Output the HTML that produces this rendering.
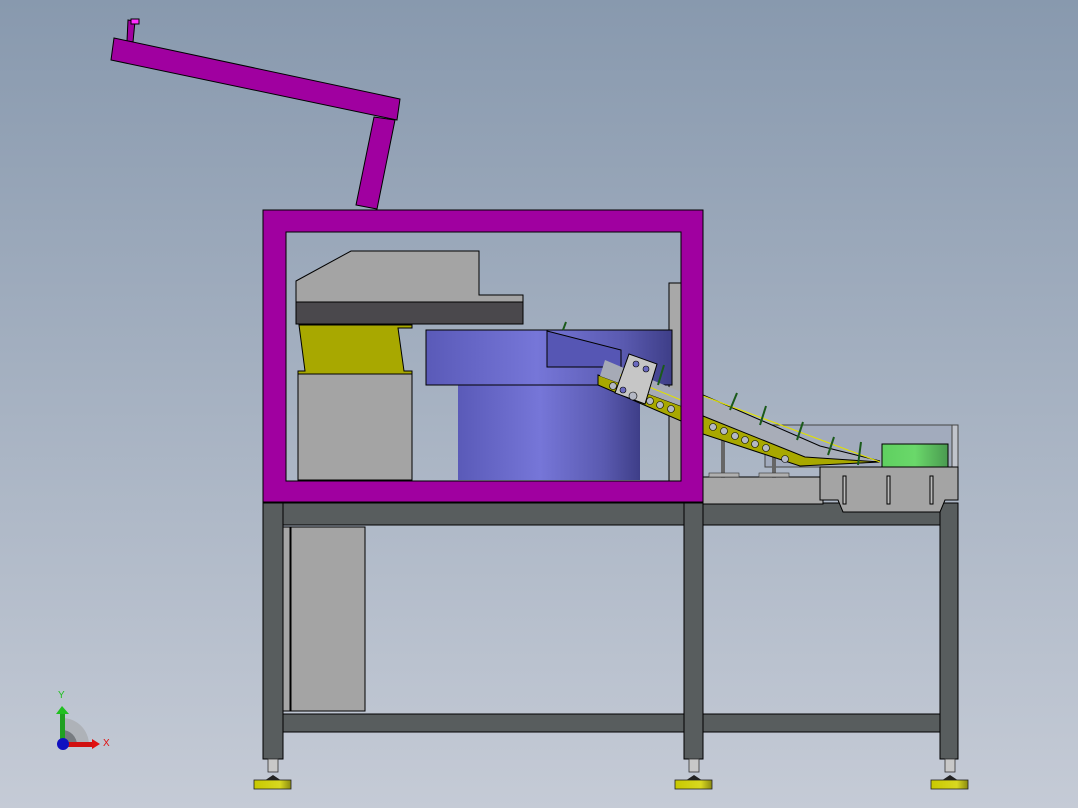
<!DOCTYPE html>
<html><head><meta charset="utf-8"><style>
html,body{margin:0;padding:0;width:1078px;height:808px;overflow:hidden}
svg{display:block}
</style></head><body>
<svg width="1078" height="808" viewBox="0 0 1078 808" xmlns="http://www.w3.org/2000/svg">
<defs>
<linearGradient id="bg" x1="0" y1="0" x2="0" y2="1"><stop offset="0" stop-color="#8899ae"/><stop offset="1" stop-color="#c5cbd6"/></linearGradient>
<linearGradient id="blue" x1="0" y1="0" x2="1" y2="0"><stop offset="0" stop-color="#5a5ab8"/><stop offset="0.45" stop-color="#7676d8"/><stop offset="0.8" stop-color="#5a5ab0"/><stop offset="1" stop-color="#3e3e88"/></linearGradient>
<linearGradient id="green" x1="0" y1="0" x2="1" y2="0"><stop offset="0" stop-color="#5fd060"/><stop offset="0.5" stop-color="#6ad86a"/><stop offset="1" stop-color="#4a9a50"/></linearGradient>
<linearGradient id="ylw" x1="0" y1="0" x2="1" y2="0"><stop offset="0" stop-color="#c8c800"/><stop offset="0.7" stop-color="#d8d820"/><stop offset="1" stop-color="#8a8a10"/></linearGradient>
</defs>
<rect width="1078" height="808" fill="url(#bg)"/>

<g fill="#a000a0" stroke="#000" stroke-width="1">
<polygon points="128,20 135,21 133,42 127,41"/>
<polygon points="114,38 400,99 397,120 111,60"/>
<polygon points="374,117 395,120 377,209 356,205"/>
</g>
<rect x="131" y="19" width="8" height="5" fill="#ff30ff" stroke="#000" stroke-width="1"/>

<g stroke="#000" stroke-width="1">
<rect x="263" y="503" width="695" height="22" fill="#585d5e"/>
<rect x="283" y="714" width="657" height="18" fill="#585d5e"/>
<rect x="263" y="503" width="20" height="256" fill="#585d5e"/>
<rect x="684" y="503" width="19" height="256" fill="#585d5e"/>
<rect x="940" y="503" width="18" height="256" fill="#585d5e"/>
<rect x="283" y="527" width="7" height="184" fill="#a6a6a6"/>
<rect x="291" y="527" width="74" height="184" fill="#a4a4a4"/>
</g>
<g id="foot">
<rect x="268" y="759" width="10" height="13" fill="#c8c8c8" stroke="#333" stroke-width="0.8"/>
<polygon points="264,781 273,775 282,781" fill="#222"/>
<rect x="254" y="780" width="37" height="9" fill="url(#ylw)" stroke="#222" stroke-width="0.8"/>
</g>
<use href="#foot" x="421"/>
<use href="#foot" x="677"/>

<rect x="703" y="477" width="120" height="27" fill="#a8a8a8" stroke="#000" stroke-width="1"/>
<rect x="765" y="425" width="193" height="42" fill="#a2abbd" stroke="#444" stroke-width="1"/>
<rect x="952" y="425" width="6" height="42" fill="#c0c4cc" stroke="#444" stroke-width="1"/>
<rect x="882" y="444" width="66" height="23" fill="url(#green)" stroke="#000" stroke-width="1"/>
<polygon points="820,467 958,467 958,500 945,500 940,512 843,512 838,500 820,500" fill="#a4a4a4" stroke="#000" stroke-width="1"/>
<g stroke="#000" stroke-width="1" fill="#bbb"><rect x="843" y="476" width="3" height="28"/><rect x="887" y="476" width="3" height="28"/><rect x="930" y="476" width="3" height="28"/></g>
<rect x="721" y="423" width="4" height="55" fill="#666"/>
<rect x="772" y="440" width="4" height="38" fill="#666"/>
<rect x="709" y="473" width="30" height="4" fill="#b0b0b0" stroke="#333" stroke-width="0.6"/>
<rect x="759" y="473" width="30" height="4" fill="#b0b0b0" stroke="#333" stroke-width="0.6"/>
<polygon points="703,395 820,446 880,461 860,463 800,463 703,416" fill="#a8adb8" stroke="#000" stroke-width="1"/>
<polygon points="703,416 805,457 880,462 800,466 703,434" fill="#a8a800" stroke="#000" stroke-width="1"/>
<line x1="703" y1="396" x2="880" y2="462" stroke="#e0e000" stroke-width="1.2"/>
<g fill="#b4b8c4" stroke="#000" stroke-width="0.6">
<circle cx="713" cy="427" r="3.5"/><circle cx="724" cy="431" r="3.5"/><circle cx="735" cy="436" r="3.5"/><circle cx="745" cy="440" r="3.5"/><circle cx="755" cy="444" r="3.5"/><circle cx="766" cy="448" r="3.5"/><circle cx="785" cy="459" r="3.5"/>
</g>
<g stroke="#1a5a1a" stroke-width="2">
<line x1="730" y1="410" x2="737" y2="393"/><line x1="760" y1="425" x2="766" y2="406"/><line x1="797" y1="440" x2="803" y2="422"/><line x1="828" y1="455" x2="834" y2="437"/><line x1="858" y1="465" x2="861" y2="442"/>
</g>

<rect x="669" y="283" width="12" height="198" fill="#a8a8a8" stroke="#000" stroke-width="1"/>
<rect x="458" y="385" width="182" height="95" fill="url(#blue)"/>
<rect x="426" y="330" width="246" height="55" fill="url(#blue)" stroke="#000" stroke-width="1"/>
<polygon points="547,331 621,350 621,367 547,367" fill="#5656b4" stroke="#000" stroke-width="1"/>
<polygon points="598,375 681,406 681,421 598,385" fill="#a8a800" stroke="#000" stroke-width="1"/>
<polygon points="605,360 645,377 681,392 681,406 600,376" fill="#a6aab6"/>
<line x1="620" y1="375" x2="681" y2="400" stroke="#e0e000" stroke-width="1"/>
<g fill="#b4b8c4" stroke="#000" stroke-width="0.6">
<circle cx="613" cy="386" r="3.5"/><circle cx="650" cy="401" r="3.5"/><circle cx="660" cy="405" r="3.5"/><circle cx="671" cy="409" r="3.5"/>
</g>
<polygon points="629,354 657,364 645,404 615,393" fill="#c6c6c6" stroke="#000" stroke-width="1"/>
<circle cx="636" cy="364" r="3" fill="#6a6ac0" stroke="#000" stroke-width="0.6"/>
<circle cx="646" cy="369" r="3" fill="#6a6ac0" stroke="#000" stroke-width="0.6"/>
<circle cx="623" cy="390" r="3" fill="#6a6ac0" stroke="#000" stroke-width="0.6"/>
<circle cx="633" cy="396" r="4" fill="#b4b8c4" stroke="#000" stroke-width="0.6"/>
<g stroke="#1a5a1a" stroke-width="2"><line x1="563" y1="330" x2="566" y2="322"/><line x1="658" y1="385" x2="664" y2="365"/></g>

<polygon points="296,281 351,251 479,251 479,295 523,295 523,302 296,302" fill="#a4a4a4" stroke="#000" stroke-width="1"/>
<rect x="296" y="302" width="227" height="22" fill="#4a484c" stroke="#000" stroke-width="1"/>
<polygon points="299,325 412,325 412,328 398,328 404,371 412,371 412,374 298,374 298,371 305,371" fill="#a8a800" stroke="#000" stroke-width="1"/>
<rect x="298" y="374" width="114" height="106" fill="#a4a4a4" stroke="#000" stroke-width="1"/>

<path d="M263,210 H703 V502 H263 Z M286,232 V481 H681 V232 Z" fill="#a000a0" fill-rule="evenodd" stroke="#000" stroke-width="1"/>

<path d="M62,745 L62,718 A27,27 0 0 1 89,745 Z" fill="#aeb2b8"/>
<path d="M62,745 L62,730 A15,15 0 0 1 77,745 Z" fill="#777b80"/>
<rect x="60" y="712" width="5" height="33" fill="#20a020"/>
<polygon points="56,714 62,706 69,714" fill="#20c020"/>
<rect x="62" y="742" width="30" height="5" fill="#d01010"/>
<polygon points="92,739 100,744 92,749" fill="#e01010"/>
<circle cx="63" cy="744" r="6" fill="#1010c0"/>
<text x="58" y="698" font-family="Liberation Sans, sans-serif" font-size="10" fill="#20c020">Y</text>
<text x="103" y="746" font-family="Liberation Sans, sans-serif" font-size="10" fill="#e01010">X</text>
</svg>
</body></html>
